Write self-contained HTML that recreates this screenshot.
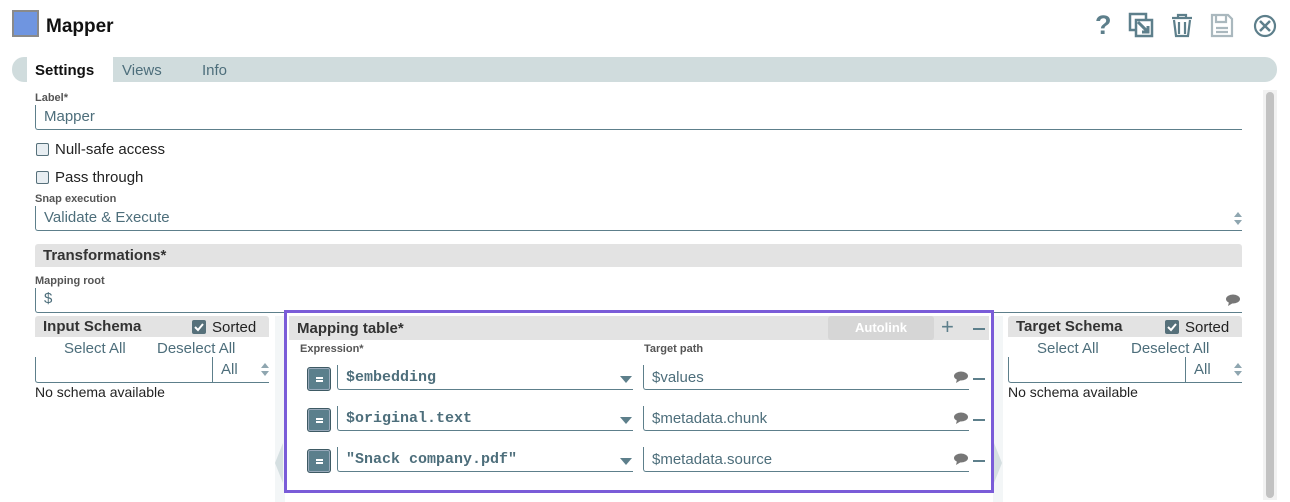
<!DOCTYPE html>
<html><head><meta charset="utf-8"><style>
*{margin:0;padding:0;box-sizing:border-box}
body{width:1290px;height:502px;background:#fff;font-family:"Liberation Sans",sans-serif;position:relative;overflow:hidden;color:#222}
.a{position:absolute}
.lbl{position:absolute;font-size:11px;font-weight:bold;color:#555}
.inp{position:absolute;border-left:1px solid #5d7f8b;border-bottom:1px solid #5d7f8b;border-bottom-left-radius:3px;font-size:15px;color:#4d6e7b;padding-left:8px}
.cb{position:absolute;width:13px;height:13px;border:1px solid #56707a;background:#e8eef2;border-radius:2px}
.cbc{position:absolute;width:14px;height:14px;background:#56707a;border-radius:2px}
.hdr{position:absolute;background:#e3e3e3;font-weight:bold;color:#333;font-size:15px;padding-left:8px;border-radius:3px 3px 0 0}
.t{position:absolute;font-size:15px;white-space:nowrap}
.lk{color:#4d6e7b}
.eq{position:absolute;width:24px;height:24px;background:#5b7f8c;border:1px solid #3e5a64;border-radius:3px;box-shadow:inset 0 0 0 1px #9ab}
.eq:after{content:"";position:absolute;left:8px;top:9px;width:7px;height:5px;border-top:2px solid #fff;border-bottom:2px solid #fff;box-sizing:border-box}
.mono{font-family:"Liberation Mono",monospace;font-size:15px;color:#4d6e7b;font-weight:bold}
.tri{position:absolute;width:0;height:0;border-left:6px solid transparent;border-right:6px solid transparent;border-top:7px solid #5d7f8b}
.dash{position:absolute;width:12px;height:2px;background:#5d7f8b}
</style></head><body>
<div class="a" style="left:12px;top:10px;width:27px;height:27px;background:#6f95e0;border:2px solid #8a8a8a"></div>
<div class="t" style="left:46px;top:16px;font-size:19px;font-weight:bold;color:#111">Mapper</div>
<svg class="a" style="left:1090px;top:10px" width="190" height="32" viewBox="0 0 190 32" fill="none" stroke="#5d7f8b">
<text x="5" y="24" font-family="Liberation Sans" font-weight="bold" font-size="27" fill="#5d7f8b" stroke="none">?</text>
<rect x="40" y="4" width="16" height="16" stroke-width="2.5"/><rect x="46" y="10" width="16" height="16" fill="#fff" stroke-width="2.5"/><path d="M48 12l10 10M52 22h6v-6" stroke-width="3"/>
<path d="M82 8h20M88 8V5h8v3M84 10l2 16h12l2-16M89 12v12M95 12v12" stroke-width="2.2"/>
<path d="M122 5h16l4 4v17h-20z M126 5v7h10V5 M126 18h12M126 22h12" stroke="#aab8be" stroke-width="2.2"/>
<circle cx="175" cy="16" r="10" stroke-width="2.2"/><path d="M170 11l10 10M180 11l-10 10" stroke-width="2.5"/>
</svg>
<div class="a" style="left:12px;top:57px;width:1265px;height:25px;background:#d0dcdd;border-radius:12px"></div>
<div class="a" style="left:27px;top:57px;width:86px;height:25px;background:#fff"></div>
<div class="t" style="left:35px;top:62px;font-weight:bold;color:#111">Settings</div>
<div class="t lk" style="left:122px;top:62px">Views</div>
<div class="t lk" style="left:202px;top:62px">Info</div>
<div class="a" style="left:1263px;top:90px;width:14px;height:410px;background:#f2f2f2"></div>
<div class="a" style="left:1266px;top:92px;width:8px;height:406px;background:#c2c2c2;border-radius:4px"></div>
<div class="lbl" style="left:35px;top:92px">Label*</div>
<div class="inp" style="left:35px;top:105px;width:1207px;height:25px;padding-top:3px">Mapper</div>
<div class="cb" style="left:36px;top:143px"></div><div class="t" style="left:55px;top:141px">Null-safe access</div>
<div class="cb" style="left:36px;top:171px"></div><div class="t" style="left:55px;top:169px">Pass through</div>
<div class="lbl" style="left:35px;top:193px">Snap execution</div>
<div class="inp" style="left:35px;top:206px;width:1207px;height:25px;padding-top:3px">Validate &amp; Execute</div>
<div class="a" style="left:1234px;top:212px;border-left:4px solid transparent;border-right:4px solid transparent;border-bottom:5px solid #8fa6b0"></div>
<div class="a" style="left:1234px;top:220px;border-left:4px solid transparent;border-right:4px solid transparent;border-top:5px solid #8fa6b0"></div>
<div class="hdr" style="left:35px;top:244px;width:1207px;height:23px;padding-top:3px">Transformations*</div>
<div class="lbl" style="left:35px;top:275px">Mapping root</div>
<div class="inp" style="left:35px;top:288px;width:1207px;height:25px;padding-top:2px">$</div>
<svg class="a" style="left:1225px;top:293px" width="16" height="14"><ellipse cx="8" cy="6" rx="7" ry="4.5" fill="#777"/><path d="M4 9l-1 4 5-3z" fill="#777"/></svg>
<div class="hdr" style="left:35px;top:316px;width:234px;height:21px;padding-top:2px">Input Schema</div>
<div class="cbc" style="left:192px;top:320px"></div><svg class="a" style="left:192px;top:320px" width="14" height="14"><path d="M3 7l3 3 5-6" stroke="#fff" stroke-width="2" fill="none"/></svg>
<div class="t" style="left:212px;top:319px;color:#222">Sorted</div>
<div class="t lk" style="left:64px;top:340px">Select All</div>
<div class="t lk" style="left:157px;top:340px">Deselect All</div>
<div class="inp" style="left:35px;top:357px;width:177px;height:26px"></div>
<div class="inp" style="left:212px;top:357px;width:57px;height:26px;padding-top:4px;border-bottom-left-radius:0">All</div>
<div class="a" style="left:261px;top:363px;border-left:4px solid transparent;border-right:4px solid transparent;border-bottom:5px solid #8fa6b0"></div>
<div class="a" style="left:261px;top:371px;border-left:4px solid transparent;border-right:4px solid transparent;border-top:5px solid #8fa6b0"></div>
<div class="t" style="left:35px;top:384px;font-size:14px">No schema available</div>
<div class="a" style="left:275px;top:316px;width:10px;height:186px;background:#f3f6f7"></div>
<div class="a" style="left:275px;top:443px;border-top:20px solid transparent;border-bottom:20px solid transparent;border-right:8px solid #d5dfe1"></div>
<div class="a" style="left:993px;top:316px;width:10px;height:186px;background:#f3f6f7"></div>
<div class="a" style="left:994px;top:443px;border-top:20px solid transparent;border-bottom:20px solid transparent;border-left:8px solid #d5dfe1"></div>
<div class="a" style="left:284px;top:310px;width:710px;height:183px;border:3px solid #7a5cd8"></div>
<div class="hdr" style="left:289px;top:316px;width:700px;height:24px;padding-top:4px;border-radius:0">Mapping table*</div>
<div class="a" style="left:828px;top:316px;width:106px;height:24px;background:#d6d6d6;border-radius:3px;color:#fff;font-weight:bold;font-size:13px;text-align:center;line-height:24px">Autolink</div>
<div class="t" style="left:941px;top:314px;font-size:22px;color:#5d7f8b">+</div>
<div class="dash" style="left:973px;top:328px"></div>
<div class="lbl" style="left:300px;top:343px">Expression*</div>
<div class="lbl" style="left:644px;top:343px">Target path</div>

<div class="eq" style="left:307px;top:367px"></div>
<div class="inp mono" style="left:337px;top:365px;width:296px;height:25px;padding-top:4px">$embedding</div>
<div class="tri" style="left:620px;top:376px"></div>
<div class="inp" style="left:643px;top:365px;width:326px;height:25px;padding-top:4px">$values</div>
<svg class="a" style="left:953px;top:371px" width="16" height="14"><ellipse cx="8" cy="5" rx="7" ry="4.5" fill="#777"/><path d="M4 8l-1 4 5-3z" fill="#777"/></svg>
<div class="dash" style="left:973px;top:378px"></div>

<div class="eq" style="left:307px;top:408px"></div>
<div class="inp mono" style="left:337px;top:406px;width:296px;height:25px;padding-top:4px">$original.text</div>
<div class="tri" style="left:620px;top:417px"></div>
<div class="inp" style="left:643px;top:406px;width:326px;height:25px;padding-top:4px">$metadata.chunk</div>
<svg class="a" style="left:953px;top:412px" width="16" height="14"><ellipse cx="8" cy="5" rx="7" ry="4.5" fill="#777"/><path d="M4 8l-1 4 5-3z" fill="#777"/></svg>
<div class="dash" style="left:973px;top:419px"></div>

<div class="eq" style="left:307px;top:449px"></div>
<div class="inp mono" style="left:337px;top:447px;width:296px;height:25px;padding-top:4px">"Snack company.pdf"</div>
<div class="tri" style="left:620px;top:458px"></div>
<div class="inp" style="left:643px;top:447px;width:326px;height:25px;padding-top:4px">$metadata.source</div>
<svg class="a" style="left:953px;top:453px" width="16" height="14"><ellipse cx="8" cy="5" rx="7" ry="4.5" fill="#777"/><path d="M4 8l-1 4 5-3z" fill="#777"/></svg>
<div class="dash" style="left:973px;top:460px"></div>
<div class="hdr" style="left:1008px;top:316px;width:234px;height:21px;padding-top:2px">Target Schema</div>
<div class="cbc" style="left:1165px;top:320px"></div><svg class="a" style="left:1165px;top:320px" width="14" height="14"><path d="M3 7l3 3 5-6" stroke="#fff" stroke-width="2" fill="none"/></svg>
<div class="t" style="left:1185px;top:319px">Sorted</div>
<div class="t lk" style="left:1037px;top:340px">Select All</div>
<div class="t lk" style="left:1131px;top:340px">Deselect All</div>
<div class="inp" style="left:1008px;top:357px;width:177px;height:26px"></div>
<div class="inp" style="left:1185px;top:357px;width:57px;height:26px;padding-top:4px;border-bottom-left-radius:0">All</div>
<div class="a" style="left:1234px;top:363px;border-left:4px solid transparent;border-right:4px solid transparent;border-bottom:5px solid #8fa6b0"></div>
<div class="a" style="left:1234px;top:371px;border-left:4px solid transparent;border-right:4px solid transparent;border-top:5px solid #8fa6b0"></div>
<div class="t" style="left:1008px;top:384px;font-size:14px">No schema available</div>
</body></html>
